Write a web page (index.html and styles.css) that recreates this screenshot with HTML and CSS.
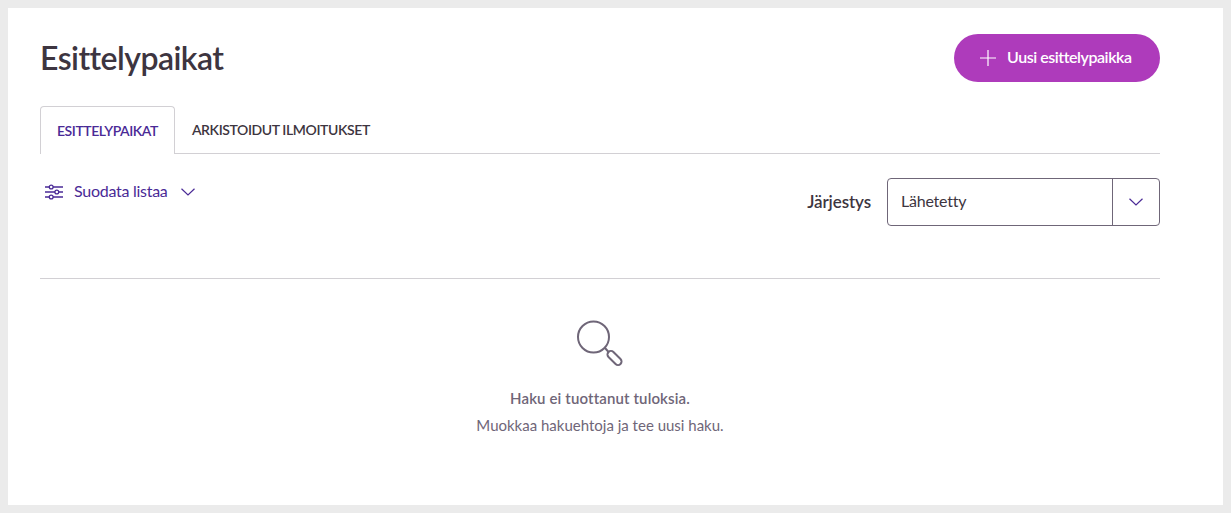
FILE: index.html
```html
<!DOCTYPE html>
<html lang="fi">
<head>
<meta charset="utf-8">
<title>Esittelypaikat</title>
<link rel="stylesheet" href="styles.css">
</head>
<body>
<main class="card">
  <header class="head">
    <h1 class="title">Esittelypaikat</h1>
    <button class="add" type="button">
      <svg class="add-icon" width="18" height="18" viewBox="0 0 18 18" fill="none" stroke="currentColor" stroke-width="1.2"><path d="M9 1v16M1 9h16"/></svg>
      <span class="add-label">Uusi esittelypaikka</span>
    </button>
  </header>
  <nav class="tabs">
    <a class="tab tab-active">ESITTELYPAIKAT</a>
    <a class="tab">ARKISTOIDUT ILMOITUKSET</a>
  </nav>
  <section class="tools">
    <button class="filter" type="button">
      <svg width="18" height="16" viewBox="0 0 18 16" fill="none" stroke="currentColor" stroke-width="1.3"><path d="M0 3h4.500M8 3h10M0 8h10M13.500 8H18M0 13h4.500M8 13h10"/><circle cx="6.200" cy="3" r="1.900"/><circle cx="11.800" cy="8" r="1.900"/><circle cx="6.200" cy="13" r="1.900"/></svg>
      <span class="filter-label">Suodata listaa</span>
      <svg class="filter-chev" width="14" height="8" viewBox="0 0 14 8" fill="none" stroke="currentColor" stroke-width="1.2"><path d="M.5.700 7 7l6.500-6.300"/></svg>
    </button>
    <div class="sort">
      <label class="sort-label">Järjestys</label>
      <div class="select">
        <span class="select-value">Lähetetty</span>
        <span class="select-btn"><svg width="14" height="8" viewBox="0 0 14 8" fill="none" stroke="currentColor" stroke-width="1.2"><path d="M.5.700 7 7l6.500-6.300"/></svg></span>
      </div>
    </div>
  </section>
  <section class="empty">
    <svg class="empty-icon" width="48" height="48" viewBox="0 0 48 48" fill="none" stroke="currentColor" stroke-width="2"><circle cx="17.500" cy="17" r="15.500"/><path d="m29 28 4 4.500"/><rect x="-3.500" y="-8.500" width="7" height="17" rx="3.500" transform="translate(38.500 38) rotate(-45)"/></svg>
    <p class="empty-title">Haku ei tuottanut tuloksia.</p>
    <p class="empty-text">Muokkaa hakuehtoja ja tee uusi haku.</p>
  </section>
</main>
</body>
</html>
```
FILE: styles.css
```css
* { box-sizing: border-box; }
html, body { margin: 0; height: 100%; }
body {
  background: #ebebeb;
  padding: 8px;
  font-family: "Lato", "Liberation Sans", sans-serif;
  color: #3d3540;
}
.card {
  background: #fff;
  height: 497px;
  padding: 26px 63px 0 32px;
}
.head {
  display: flex;
  justify-content: space-between;
  align-items: center;
  height: 48px;
}
.title {
  margin: 0;
  font-size: 32px;
  font-weight: 600;
  letter-spacing: -0.55px;
  line-height: 48px;
  color: #3d3540;
}
.add {
  display: flex;
  align-items: center;
  gap: 10px;
  width: 206px;
  height: 48px;
  padding: 0 0 0 25px;
  border: 0;
  border-radius: 24px;
  background: #ae3bbb;
  color: #fff;
  font: 600 16px "Lato", sans-serif;
  letter-spacing: -0.45px;
}
.add-label { line-height: 20px; margin-top: -2px; }
.tabs {
  display: flex;
  height: 48px;
  margin-top: 24px;
  border-bottom: 1px solid #d2d0d4;
}
.tab {
  height: 48px;
  padding: 0 17px;
  font-size: 14px;
  font-weight: 600;
  letter-spacing: -0.4px;
  line-height: 48px;
  color: #3d3540;
}
.tab-active {
  border: 1px solid #d2d0d4;
  border-bottom: 0;
  border-radius: 4px 4px 0 0;
  padding: 0 16px;
  background: #fff;
  color: #4a2a96;
  letter-spacing: -0.45px;
}
.tools {
  display: flex;
  justify-content: space-between;
  align-items: flex-start;
  height: 125px;
  padding-top: 24px;
  border-bottom: 1px solid #d2d0d4;
}
.filter {
  display: flex;
  align-items: center;
  height: 27px;
  padding: 0 0 0 5px;
  border: 0;
  background: none;
  color: #4a2a96;
  font: 400 16px "Lato", sans-serif;
  letter-spacing: -0.27px;
}
.filter-label { margin-left: 11px; line-height: 20px; margin-top: -2px; }
.filter-chev { margin-left: 13px; }
.sort { display: flex; align-items: center; gap: 16px; }
.sort-label { font-size: 17px; font-weight: 600; letter-spacing: -0.1px; line-height: 20px; }
.select {
  display: flex;
  width: 273px;
  height: 48px;
  border: 1px solid #6f6678;
  border-radius: 4px;
}
.select-value {
  flex: 1;
  padding-left: 13px;
  font-size: 16px;
  letter-spacing: -0.22px;
  line-height: 44px;
}
.select-btn {
  display: flex;
  align-items: center;
  justify-content: center;
  width: 47px;
  border-left: 1px solid #6f6678;
  color: #4a2a96;
}
.empty {
  display: flex;
  flex-direction: column;
  align-items: center;
  padding-top: 41px;
  color: #6f6678;
}
.empty-icon { display: block; }
.empty-title {
  margin: 20px 0 0;
  font-size: 15px;
  font-weight: 600;
  letter-spacing: 0.13px;
  line-height: 20px;
}
.empty-text {
  margin: 7px 0 0;
  font-size: 15px;
  line-height: 20px;
}
```
